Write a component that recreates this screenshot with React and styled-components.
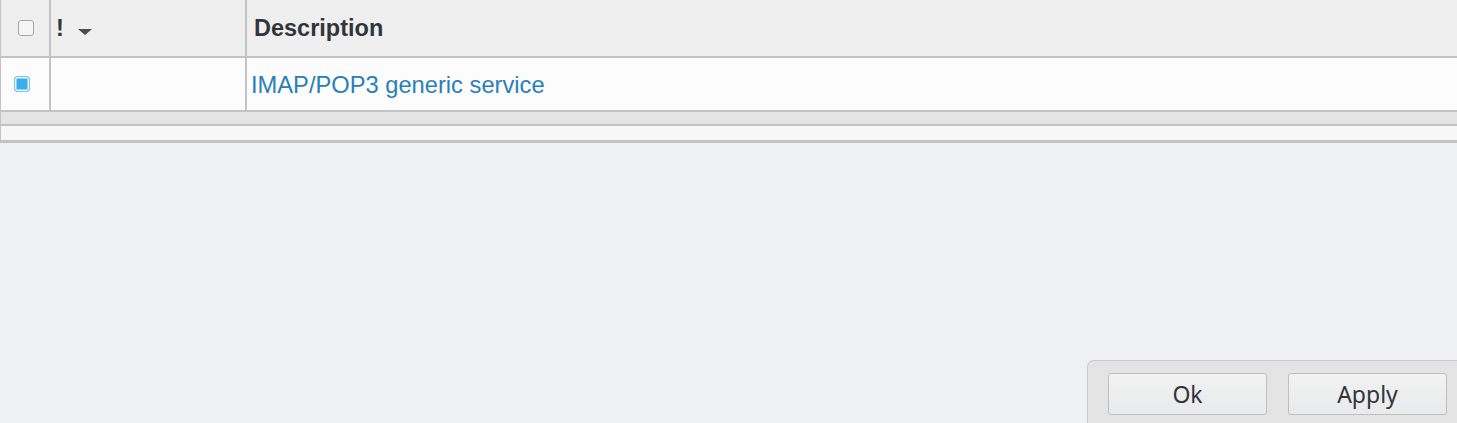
import React from 'react';
import styled, { createGlobalStyle } from 'styled-components';

const GlobalStyle = createGlobalStyle`
  html, body {
    margin: 0;
    padding: 0;
    background: #eff0f1;
    font-family: "Liberation Sans", Arial, sans-serif;
    color: #31363b;
  }
`;

const Page = styled.div`
  display: flex;
  flex-direction: column;
  height: 423px;
  overflow: hidden;
`;

const Table = styled.div`
  border-left: 1px solid #c3c3c3;
  border-bottom: 3px solid #c3c3c3;
  background: #f7f7f7;
`;

const Row = styled.div`
  display: grid;
  grid-template-columns: 50px 196px 1fr;
  height: ${p => p.height}px;
  background: ${p => (p.header ? '#efefef' : '#fcfcfc')};
  border-bottom: 2px solid #c3c3c3;
`;

const Cell = styled.div`
  display: flex;
  align-items: center;
  padding-left: ${p => p.pad || 0}px;
  padding-top: ${p => p.top || 0}px;
  border-right: ${p => (p.last ? 'none' : '2px solid #c3c3c3')};
`;

const HeadText = styled.span`
  font-weight: bold;
  font-size: 23.5px;
  color: #31363b;
`;

const LinkText = styled.span`
  font-size: 23.7px;
  color: #2980b9;
`;

const Box = styled.span`
  display: inline-block;
  box-sizing: border-box;
  width: 16px;
  height: 16px;
  border-radius: 3px;
  border: 1px solid ${p => (p.checked ? '#7cc4ee' : '#a4a6a8')};
  background: ${p => (p.checked ? '#3daee9' : '#f5f5f5')};
  box-shadow: ${p => (p.checked ? 'inset 0 0 0 1.5px #eaf6fd' : 'none')};
`;

const SortArrow = styled.span`
  display: inline-block;
  width: 0;
  height: 0;
  margin-left: 14px;
  margin-top: 7px;
  border-left: 7px solid transparent;
  border-right: 7px solid transparent;
  border-top: 6px solid #4a4a4a;
`;

const ScrollTrack = styled.div`
  height: 12px;
  background: #e4e4e4;
  border-bottom: 2px solid #c3c3c3;
`;

const Filler = styled.div`
  height: 14px;
  background: #f7f7f7;
`;

const Spacer = styled.div`
  flex: 1;
`;

const Footer = styled.div`
  align-self: flex-end;
  display: flex;
  gap: 21px;
  box-sizing: border-box;
  width: 370px;
  height: 63px;
  padding: 12px 10px 0 20px;
  background: #e4e4e4;
  border-top: 1px solid #cacaca;
  border-left: 1px solid #cacaca;
  border-top-left-radius: 7px;
`;

const Button = styled.button`
  box-sizing: border-box;
  width: 160px;
  height: 42px;
  border: 1px solid #bfbfbf;
  border-radius: 3px;
  background: linear-gradient(#f2f2f2, #e9eaeb);
  font-family: "Noto Sans", "Open Sans", sans-serif;
  font-size: 23px;
  color: #31363b;
  padding: 0;
`;

export default function App() {
  return (
    <Page>
      <GlobalStyle />
      <Table>
        <Row header height={56}>
          <Cell pad={17}>
            <Box />
          </Cell>
          <Cell pad={5}>
            <HeadText>!</HeadText>
            <SortArrow />
          </Cell>
          <Cell pad={7} top={1} last>
            <HeadText>Description</HeadText>
          </Cell>
        </Row>
        <Row height={52}>
          <Cell pad={13}>
            <Box checked />
          </Cell>
          <Cell />
          <Cell pad={4} top={3} last>
            <LinkText>IMAP/POP3 generic service</LinkText>
          </Cell>
        </Row>
        <ScrollTrack />
        <Filler />
      </Table>
      <Spacer />
      <Footer>
        <Button>Ok</Button>
        <Button>Apply</Button>
      </Footer>
    </Page>
  );
}
